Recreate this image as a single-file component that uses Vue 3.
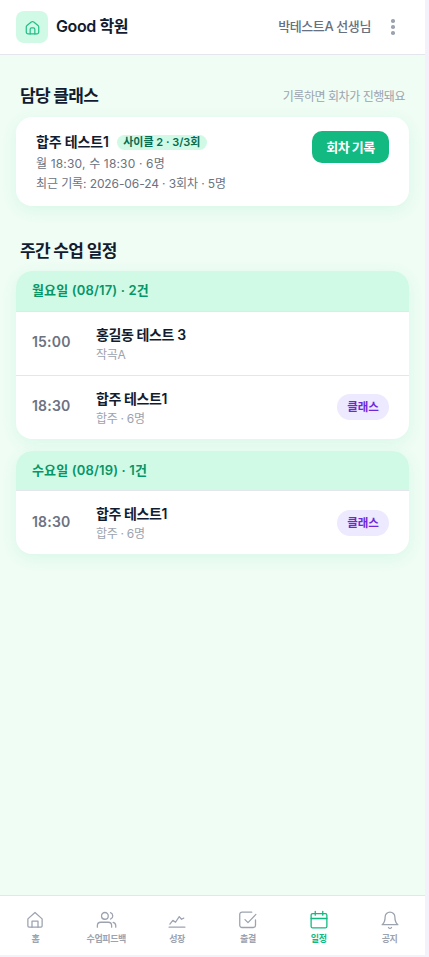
<script setup>
const homePaths = ['M12 3.5a2 2 0 0 1 1.3.5l6.5 5.2a2.5 2.5 0 0 1 1 2V18.5a2.5 2.5 0 0 1-2.5 2.5H5.7a2.5 2.5 0 0 1-2.5-2.5V11.2a2.5 2.5 0 0 1 1-2L10.700 4a2 2 0 0 1 1.3-.5z', 'M8.7 21v-6.5a2 2 0 0 1 2-2h2.6a2 2 0 0 1 2 2V21']

const days = [
  {
    label: '월요일 (08/17) · 2건',
    lessons: [
      { time: '15:00', name: '홍길동 테스트 3', sub: '작곡A', group: false },
      { time: '18:30', name: '합주 테스트1', sub: '합주 · 6명', group: true },
    ],
  },
  {
    label: '수요일 (08/19) · 1건',
    lessons: [{ time: '18:30', name: '합주 테스트1', sub: '합주 · 6명', group: true }],
  },
]

const tabs = [
  { label: '홈', paths: ['M2.5 10.5 12 2l9.5 8.5V20a1.5 1.5 0 0 1-1.5 1.5H4A1.5 1.5 0 0 1 2.5 20z', 'M8 21.5V13.5h8v8'] },
  {
    label: '수업피드백',
    paths: [
      'M10.5 2a4.5 4.5 0 1 1 0 9 4.5 4.5 0 0 1 0-9z',
      'M.5 21.5v-2A4.5 4.5 0 0 1 5 15h10a4.5 4.5 0 0 1 4.5 4.5v2',
      'M18 2.3a4.5 4.5 0 0 1 0 8.5',
      'M21.5 15.2a4.5 4.5 0 0 1 3.5 4.3v2',
    ],
  },
  { label: '성장', paths: ['M1.5 21.5h21', 'M2.5 17.500l4-5 3.5 2.5 5-7.5 3 3.5 3-1.5'] },
  { label: '출결', paths: ['M8 11.5l4 4L22.5 4.5', 'M22 12v7a3 3 0 0 1-3 3H4a3 3 0 0 1-3-3V4.500A3 3 0 0 1 4 1.5h13'] },
  { label: '일정', active: true, paths: ['M3.5 3.5h17a2 2 0 0 1 2 2v15a2 2 0 0 1-2 2h-17a2 2 0 0 1-2-2v-15a2 2 0 0 1 2-2z', 'M7 .5v5', 'M17 .5v5', 'M1.5 10h21'] },
  { label: '공지', paths: ['M18.5 8a6.5 6.5 0 0 0-13 0c0 7-4 10.300-4 10.300h21s-4-3.300-4-10.300', 'M10 22a2.300 2.300 0 0 0 4 0'] },
]
</script>

<template>
  <div class="app">
    <header class="topbar">
      <div class="logo">
        <svg viewBox="0 0 24 24"><path v-for="p in homePaths" :key="p" :d="p" /></svg>
      </div>
      <h1>Good 학원</h1>
      <span class="teacher">박테스트A 선생님</span>
      <button class="more" aria-label="메뉴"><i></i><i></i><i></i></button>
    </header>

    <main>
      <div class="section-head">
        <h2>담당 클래스</h2>
        <span class="hint">기록하면 회차가 진행돼요</span>
      </div>
      <section class="card class-card">
        <div class="class-info">
          <div class="class-title">
            <strong>합주 테스트1</strong>
            <span class="cycle">사이클 2 · 3/3회</span>
          </div>
          <p class="when">월 18:30, 수 18:30 · 6명</p>
          <p class="recent">최근 기록: 2026-06-24 · 3회차 · 5명</p>
        </div>
        <button class="record">회차 기록</button>
      </section>

      <div class="section-head weekly"><h2>주간 수업 일정</h2></div>
      <section v-for="day in days" :key="day.label" class="card day">
        <h3>{{ day.label }}</h3>
        <div v-for="l in day.lessons" :key="l.time" class="lesson">
          <time>{{ l.time }}</time>
          <div class="detail">
            <strong>{{ l.name }}</strong>
            <span>{{ l.sub }}</span>
          </div>
          <em v-if="l.group">클래스</em>
        </div>
      </section>
    </main>

    <nav>
      <a v-for="t in tabs" :key="t.label" :class="{ active: t.active }">
        <svg viewBox="0 0 24 24"><path v-for="p in t.paths" :key="p" :d="p" /></svg>
        <span>{{ t.label }}</span>
      </a>
    </nav>
  </div>
</template>

<style>
body { background: #f3f2fa; }
</style>

<style scoped>
* { box-sizing: border-box; margin: 0; }
.app {
  width: 425px;
  height: 955px;
  display: flex;
  flex-direction: column;
  background: #effdf4;
  font-family: Inter, "Noto Sans CJK KR", sans-serif;
  color: #111c30;
  white-space: nowrap;
}
button { border: 0; padding: 0; font-family: inherit; }
svg { fill: none; stroke: currentColor; stroke-width: 1.5; stroke-linecap: round; stroke-linejoin: round; overflow: visible; }
.topbar { height: 55px; flex: none; display: flex; align-items: center; padding: 0 24px 0 16px; background: #fff; border-bottom: 1px solid #e3e6ea; }
.logo { width: 32px; height: 32px; border-radius: 8px; background: #d0fae5; color: #22bd88; display: grid; place-items: center; }
.logo svg { width: 17px; height: 17px; stroke-width: 1.7; }
h1 { margin-left: 8px; font-size: 16px; line-height: 22px; padding-bottom: 2px; font-weight: 600; letter-spacing: -.4px; }
.teacher { margin-left: auto; padding-bottom: 2px; font-size: 13px; line-height: 20px; font-weight: 500; color: #667080; letter-spacing: -.4px; }
.more { width: 16px; margin-left: 14px; display: flex; flex-direction: column; align-items: center; gap: 2.4px; background: none; }
.more i { width: 3.6px; height: 3.6px; border-radius: 50%; background: #9ca3af; }
main { flex: 1; padding: 29px 16px 0; }
.section-head { display: flex; align-items: center; justify-content: space-between; height: 24px; padding: 0 4px; margin-bottom: 9px; }
h2 { font-size: 17px; line-height: 24px; font-weight: 700; letter-spacing: -.65px; }
.hint { padding-top: 2px; font-size: 12px; line-height: 18px; color: #9ca3af; letter-spacing: -.46px; }
.card { background: #fff; border-radius: 16px; box-shadow: 0 4px 16px rgba(16, 185, 129, .09); }
.class-card { height: 89px; padding: 14px 20px; display: flex; justify-content: space-between; align-items: flex-start; }
.class-title { display: flex; align-items: center; height: 23px; gap: 8px; }
.class-title strong { padding-bottom: 2px; font-size: 14px; font-weight: 600; line-height: 20px; letter-spacing: -.15px; }
.cycle { width: 90px; text-align: center; height: 15px; line-height: 15px; border-radius: 8px; background: #d0fae5; color: #086b50; font-size: 11px; font-weight: 600; }
.class-info p { font-size: 12px; line-height: 20px; color: #6b7280; }
.class-info .when { letter-spacing: .16px; }
.class-info .recent { letter-spacing: -.1px; }
.record { width: 77px; height: 32px; padding-bottom: 1px; border-radius: 10px; background: #12b981; color: #fff; font-size: 13px; font-weight: 700; letter-spacing: -.5px; }
.weekly { margin-top: 33px; margin-bottom: 8px; }
.day { overflow: hidden; margin-bottom: 12px; }
h3 { height: 39.5px; padding: 0 16px; font-size: 13px; line-height: 38px; font-weight: 600; background: #d0fae5; color: #059669; letter-spacing: .15px; }
.lesson { height: 64px; border-top: 1px solid #e3e6ea; padding: 0 20px 0 16px; display: flex; align-items: center; }
time { width: 64px; padding-bottom: 2px; font-size: 14px; line-height: 20px; font-weight: 600; color: #6b7280; letter-spacing: .2px; }
.detail { flex: 1; padding-top: 2px; display: flex; flex-direction: column; }
.detail strong { font-size: 14px; line-height: 20px; font-weight: 600; letter-spacing: -.4px; }
.detail span { font-size: 12px; line-height: 19px; color: #9ca3af; letter-spacing: -.3px; }
em { width: 52px; height: 26px; line-height: 26px; border-radius: 13px; text-align: center; background: #ede9fe; color: #6d28d9; font-size: 11.5px; font-style: normal; font-weight: 700; }
nav { height: 60px; flex: none; display: grid; grid-template-columns: repeat(6, 1fr); background: #fff; border-top: 1px solid #e3e6ea; }
nav a { display: flex; flex-direction: column; align-items: center; padding-top: 15px; color: #9ca3af; }
nav svg { width: 18px; height: 18px; stroke-width: 1.7; }
nav span { margin-top: 3px; font-size: 9px; line-height: 14px; font-weight: 600; letter-spacing: -.4px; }
nav .active { color: #10b981; }
nav .active span { font-weight: 700; }
</style>
